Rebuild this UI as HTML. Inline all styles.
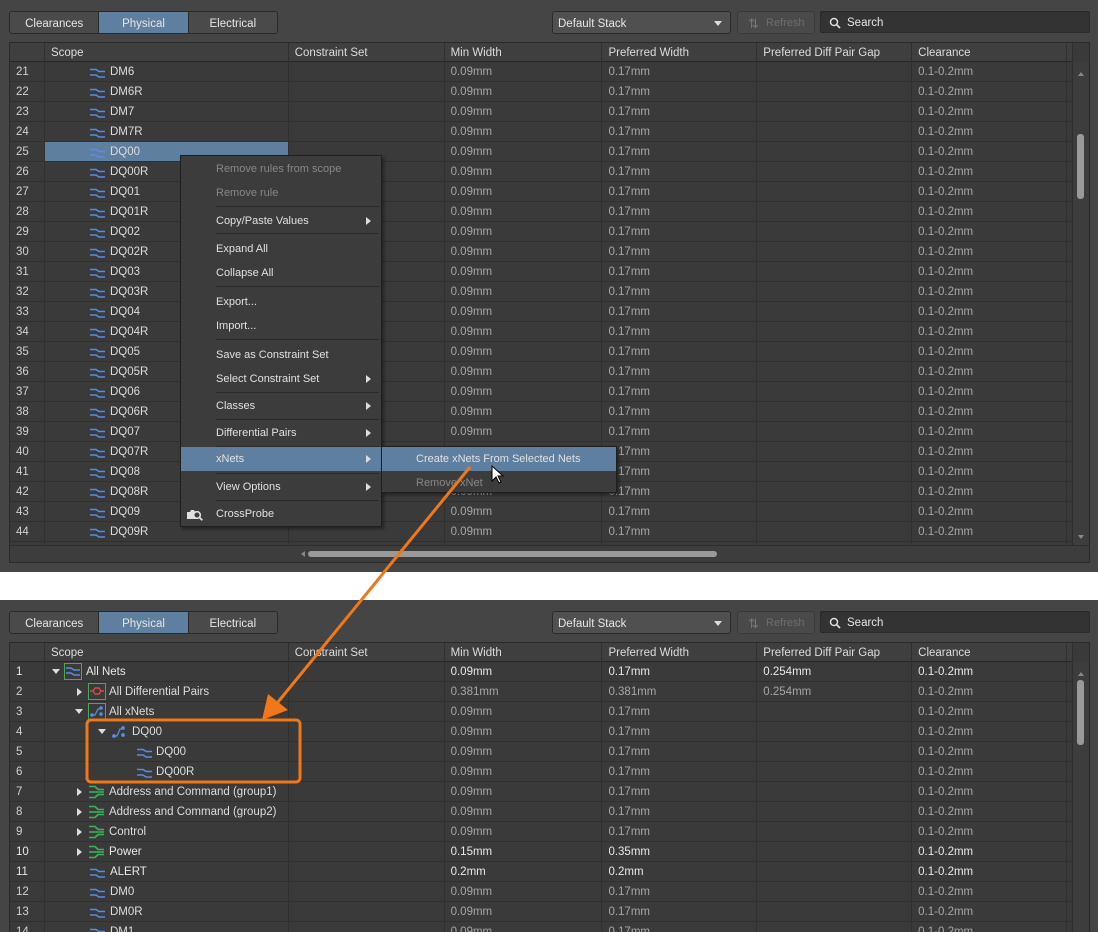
<!DOCTYPE html><html><head><meta charset="utf-8"><style>
*{box-sizing:border-box;margin:0;padding:0}
body{width:1098px;height:932px;background:#fff;font-family:"Liberation Sans","DejaVu Sans",sans-serif;font-size:11.5px;color:#d8d8d8;position:relative;overflow:hidden}
.panel{position:absolute;left:0;width:1098px;background:#454545;overflow:hidden}
.tabs{position:absolute;left:9px;top:11px;width:269px;height:23px;border:1px solid #2a2a2a;border-radius:3px;display:flex;overflow:hidden;background:#4a4a4a}
.tabs div{flex:1;text-align:center;line-height:24px;font-size:11.5px;color:#e6e6e6;border-right:1px solid #2a2a2a}
.tabs div:last-child{border:none}
.tabs .on{background:#5e7f9f}
.dd{position:absolute;left:552px;top:11px;width:179px;height:23px;border:1px solid #2a2a2a;border-radius:3px;background:#505050;line-height:24px;padding-left:5px;font-size:11.5px;color:#e6e6e6}
.dd:after{content:"";position:absolute;right:8px;top:9px;border:4px solid transparent;border-top:5px solid #ddd}
.rf{position:absolute;left:737px;top:11px;width:78px;height:23px;border:1px solid #3a3a3a;border-radius:3px;background:#4a4a4a;color:#6c6c6c;line-height:23px;padding-left:28px;font-size:11px}
.rf span{position:absolute;left:10px;top:0;color:#777;font-size:13px}
.sr{position:absolute;left:820px;top:11px;width:270px;height:22px;border:1px solid #2a2a2a;border-radius:2px;background:#333;line-height:22px;padding-left:26px;font-size:11.5px;color:#e6e6e6}
.sr svg{position:absolute;left:8px;top:5px}
.tbl{position:absolute;left:9px;width:1081px;border:1px solid #2a2a2a;background:#3a3a3a;overflow:hidden}
.r{position:absolute;left:0;height:20px;width:1063px;display:flex;border-bottom:1px solid #303030}
.r>div{height:19px;line-height:21px;border-right:1px solid #303030;padding-left:6px;white-space:nowrap;overflow:hidden;color:#a6a6a6;position:relative}
.r>div:nth-child(1){width:35px;color:#d0d0d0}
.r>div:nth-child(2){width:244px;color:#dcdcdc}
.r>div:nth-child(3){width:156px}
.r>div:nth-child(4){width:158px}
.r>div:nth-child(5){width:155px}
.r>div:nth-child(6){width:155px}
.r>div:nth-child(7){width:155px}
.r>div:nth-child(8){width:6px;padding:0}
.h{background:#3f3f3f;border-bottom:1px solid #262626;height:19px}
.h>div{color:#dcdcdc!important}
.w>div{color:#e8e8e8!important}
.sel>div:nth-child(2){background:#5e7f9f}
.ic{position:absolute;top:5px}
.tx{position:absolute;top:0}
.tri{position:absolute;top:7px;width:0;height:0}
.td{border-left:4px solid transparent;border-right:4px solid transparent;border-top:5px solid #ddd}
.tr{border-top:4px solid transparent;border-bottom:4px solid transparent;border-left:5px solid #ddd;top:6px}
.vs{position:absolute;right:0;top:19px;width:17px;bottom:0;background:#3d3d3d;border-left:1px solid #2e2e2e}
.thumb{position:absolute;left:4px;width:7px;background:#9a9a9a;border-radius:3px}
.menu{position:absolute;background:#3c3c3c;border:1px solid #1f1f1f;box-shadow:2px 2px 3px rgba(0,0,0,.4)}
.mi{position:absolute;left:0;right:0;height:24px;line-height:25px;padding-left:35px;color:#e0e0e0;font-size:11px}
.mi.d{color:#878787}
.mi.hl{background:#5e7f9f}
.mi .ar{position:absolute;right:10px;top:8px;border-top:4px solid transparent;border-bottom:4px solid transparent;border-left:5px solid #ddd}
.sep{position:absolute;left:35px;right:2px;height:1px;background:#2a2a2a}
</style></head><body>
<svg width="0" height="0" style="position:absolute"><defs>
<g id="net"><path d="M1 2.5h6l3 2h6M1 8h6l3 2h6" stroke="#5a8be0" stroke-width="1.6" fill="none"/></g>
<g id="bus"><path d="M1 1.5h6l3 3h6M1 7h15M1 12.5h6l3-3h6" stroke="#3bb45a" stroke-width="1.6" fill="none"/></g>
</defs></svg>

<!-- TOP PANEL -->
<div class="panel" style="top:0;height:572px">
<div class="tabs"><div>Clearances</div><div class="on">Physical</div><div>Electrical</div></div>
<div class="dd">Default Stack</div>
<div class="rf"><span>⇅</span>Refresh</div>
<div class="sr"><svg width="12" height="12"><circle cx="5" cy="5" r="3.5" stroke="#ddd" stroke-width="1.5" fill="none"/><path d="M7.5 7.5l3.5 3.5" stroke="#ddd" stroke-width="1.8"/></svg>Search</div>
<div class="tbl" style="top:42px;height:521px">
<div class="r h" style="top:0"><div></div><div>Scope</div><div>Constraint Set</div><div>Min Width</div><div>Preferred Width</div><div>Preferred Diff Pair Gap</div><div>Clearance</div><div></div></div>
<div class="r" style="top:19px"><div>21</div><div><svg class="ic" style="left:44px" width="17" height="12"><use href="#net"/></svg><span class="tx" style="left:65px">DM6</span></div><div></div><div>0.09mm</div><div>0.17mm</div><div></div><div>0.1-0.2mm</div><div></div></div>
<div class="r" style="top:39px"><div>22</div><div><svg class="ic" style="left:44px" width="17" height="12"><use href="#net"/></svg><span class="tx" style="left:65px">DM6R</span></div><div></div><div>0.09mm</div><div>0.17mm</div><div></div><div>0.1-0.2mm</div><div></div></div>
<div class="r" style="top:59px"><div>23</div><div><svg class="ic" style="left:44px" width="17" height="12"><use href="#net"/></svg><span class="tx" style="left:65px">DM7</span></div><div></div><div>0.09mm</div><div>0.17mm</div><div></div><div>0.1-0.2mm</div><div></div></div>
<div class="r" style="top:79px"><div>24</div><div><svg class="ic" style="left:44px" width="17" height="12"><use href="#net"/></svg><span class="tx" style="left:65px">DM7R</span></div><div></div><div>0.09mm</div><div>0.17mm</div><div></div><div>0.1-0.2mm</div><div></div></div>
<div class="r sel" style="top:99px"><div>25</div><div><svg class="ic" style="left:44px" width="17" height="12"><use href="#net"/></svg><span class="tx" style="left:65px">DQ00</span></div><div></div><div>0.09mm</div><div>0.17mm</div><div></div><div>0.1-0.2mm</div><div></div></div>
<div class="r" style="top:119px"><div>26</div><div><svg class="ic" style="left:44px" width="17" height="12"><use href="#net"/></svg><span class="tx" style="left:65px">DQ00R</span></div><div></div><div>0.09mm</div><div>0.17mm</div><div></div><div>0.1-0.2mm</div><div></div></div>
<div class="r" style="top:139px"><div>27</div><div><svg class="ic" style="left:44px" width="17" height="12"><use href="#net"/></svg><span class="tx" style="left:65px">DQ01</span></div><div></div><div>0.09mm</div><div>0.17mm</div><div></div><div>0.1-0.2mm</div><div></div></div>
<div class="r" style="top:159px"><div>28</div><div><svg class="ic" style="left:44px" width="17" height="12"><use href="#net"/></svg><span class="tx" style="left:65px">DQ01R</span></div><div></div><div>0.09mm</div><div>0.17mm</div><div></div><div>0.1-0.2mm</div><div></div></div>
<div class="r" style="top:179px"><div>29</div><div><svg class="ic" style="left:44px" width="17" height="12"><use href="#net"/></svg><span class="tx" style="left:65px">DQ02</span></div><div></div><div>0.09mm</div><div>0.17mm</div><div></div><div>0.1-0.2mm</div><div></div></div>
<div class="r" style="top:199px"><div>30</div><div><svg class="ic" style="left:44px" width="17" height="12"><use href="#net"/></svg><span class="tx" style="left:65px">DQ02R</span></div><div></div><div>0.09mm</div><div>0.17mm</div><div></div><div>0.1-0.2mm</div><div></div></div>
<div class="r" style="top:219px"><div>31</div><div><svg class="ic" style="left:44px" width="17" height="12"><use href="#net"/></svg><span class="tx" style="left:65px">DQ03</span></div><div></div><div>0.09mm</div><div>0.17mm</div><div></div><div>0.1-0.2mm</div><div></div></div>
<div class="r" style="top:239px"><div>32</div><div><svg class="ic" style="left:44px" width="17" height="12"><use href="#net"/></svg><span class="tx" style="left:65px">DQ03R</span></div><div></div><div>0.09mm</div><div>0.17mm</div><div></div><div>0.1-0.2mm</div><div></div></div>
<div class="r" style="top:259px"><div>33</div><div><svg class="ic" style="left:44px" width="17" height="12"><use href="#net"/></svg><span class="tx" style="left:65px">DQ04</span></div><div></div><div>0.09mm</div><div>0.17mm</div><div></div><div>0.1-0.2mm</div><div></div></div>
<div class="r" style="top:279px"><div>34</div><div><svg class="ic" style="left:44px" width="17" height="12"><use href="#net"/></svg><span class="tx" style="left:65px">DQ04R</span></div><div></div><div>0.09mm</div><div>0.17mm</div><div></div><div>0.1-0.2mm</div><div></div></div>
<div class="r" style="top:299px"><div>35</div><div><svg class="ic" style="left:44px" width="17" height="12"><use href="#net"/></svg><span class="tx" style="left:65px">DQ05</span></div><div></div><div>0.09mm</div><div>0.17mm</div><div></div><div>0.1-0.2mm</div><div></div></div>
<div class="r" style="top:319px"><div>36</div><div><svg class="ic" style="left:44px" width="17" height="12"><use href="#net"/></svg><span class="tx" style="left:65px">DQ05R</span></div><div></div><div>0.09mm</div><div>0.17mm</div><div></div><div>0.1-0.2mm</div><div></div></div>
<div class="r" style="top:339px"><div>37</div><div><svg class="ic" style="left:44px" width="17" height="12"><use href="#net"/></svg><span class="tx" style="left:65px">DQ06</span></div><div></div><div>0.09mm</div><div>0.17mm</div><div></div><div>0.1-0.2mm</div><div></div></div>
<div class="r" style="top:359px"><div>38</div><div><svg class="ic" style="left:44px" width="17" height="12"><use href="#net"/></svg><span class="tx" style="left:65px">DQ06R</span></div><div></div><div>0.09mm</div><div>0.17mm</div><div></div><div>0.1-0.2mm</div><div></div></div>
<div class="r" style="top:379px"><div>39</div><div><svg class="ic" style="left:44px" width="17" height="12"><use href="#net"/></svg><span class="tx" style="left:65px">DQ07</span></div><div></div><div>0.09mm</div><div>0.17mm</div><div></div><div>0.1-0.2mm</div><div></div></div>
<div class="r" style="top:399px"><div>40</div><div><svg class="ic" style="left:44px" width="17" height="12"><use href="#net"/></svg><span class="tx" style="left:65px">DQ07R</span></div><div></div><div>0.09mm</div><div>0.17mm</div><div></div><div>0.1-0.2mm</div><div></div></div>
<div class="r" style="top:419px"><div>41</div><div><svg class="ic" style="left:44px" width="17" height="12"><use href="#net"/></svg><span class="tx" style="left:65px">DQ08</span></div><div></div><div>0.09mm</div><div>0.17mm</div><div></div><div>0.1-0.2mm</div><div></div></div>
<div class="r" style="top:439px"><div>42</div><div><svg class="ic" style="left:44px" width="17" height="12"><use href="#net"/></svg><span class="tx" style="left:65px">DQ08R</span></div><div></div><div>0.09mm</div><div>0.17mm</div><div></div><div>0.1-0.2mm</div><div></div></div>
<div class="r" style="top:459px"><div>43</div><div><svg class="ic" style="left:44px" width="17" height="12"><use href="#net"/></svg><span class="tx" style="left:65px">DQ09</span></div><div></div><div>0.09mm</div><div>0.17mm</div><div></div><div>0.1-0.2mm</div><div></div></div>
<div class="r" style="top:479px"><div>44</div><div><svg class="ic" style="left:44px" width="17" height="12"><use href="#net"/></svg><span class="tx" style="left:65px">DQ09R</span></div><div></div><div>0.09mm</div><div>0.17mm</div><div></div><div>0.1-0.2mm</div><div></div></div>
<div class="r" style="top:499px"><div></div><div><svg class="ic" style="left:44px" width="17" height="12"><use href="#net"/></svg></div><div></div><div></div><div></div><div></div><div></div><div></div></div>
<div class="vs" style="bottom:17px"><div style="position:absolute;left:5px;top:7px;border:3px solid transparent;border-bottom:4px solid #888"></div><div class="thumb" style="top:72px;height:65px"></div><div style="position:absolute;left:5px;bottom:3px;border:3px solid transparent;border-top:4px solid #888"></div></div>
<div style="position:absolute;left:0;right:0;bottom:0;height:17px;background:#3d3d3d;border-top:1px solid #2e2e2e"><div style="position:absolute;left:288px;top:5px;border:3px solid transparent;border-right:4px solid #888"></div><div style="position:absolute;left:298px;top:5px;width:409px;height:6px;border-radius:3px;background:#9a9a9a"></div></div>
</div>

<!-- context menu -->
<div class="menu" style="left:180px;top:155px;width:202px;height:372px">
<div class="mi d" style="top:1px">Remove rules from scope</div>
<div class="mi d" style="top:25px">Remove rule</div>
<div class="sep" style="top:50px"></div>
<div class="mi" style="top:53px">Copy/Paste Values<i class="ar"></i></div>
<div class="sep" style="top:77px"></div>
<div class="mi" style="top:81px">Expand All</div>
<div class="mi" style="top:105px">Collapse All</div>
<div class="sep" style="top:130px"></div>
<div class="mi" style="top:134px">Export...</div>
<div class="mi" style="top:158px">Import...</div>
<div class="sep" style="top:183px"></div>
<div class="mi" style="top:187px">Save as Constraint Set</div>
<div class="mi" style="top:211px">Select Constraint Set<i class="ar"></i></div>
<div class="sep" style="top:236px"></div>
<div class="mi" style="top:238px">Classes<i class="ar"></i></div>
<div class="sep" style="top:263px"></div>
<div class="mi" style="top:265px">Differential Pairs<i class="ar"></i></div>
<div class="sep" style="top:290px"></div>
<div class="mi hl" style="top:291px">xNets<i class="ar"></i></div>
<div class="sep" style="top:317px"></div>
<div class="mi" style="top:319px">View Options<i class="ar"></i></div>
<div class="sep" style="top:344px"></div>
<div class="mi" style="top:346px"><svg style="position:absolute;left:5px;top:6px" width="18" height="13"><path d="M1 4h3l1-2h3l1 2h1v7H1z" fill="#e0e0e0"/><circle cx="11" cy="7" r="3.3" stroke="#e0e0e0" stroke-width="1.6" fill="#3c3c3c"/><path d="M13.3 9.3l3 3" stroke="#e0e0e0" stroke-width="1.8"/></svg>CrossProbe</div>
</div>
<div class="menu" style="left:381px;top:446px;width:236px;height:47px">
<div class="mi hl" style="top:0;padding-left:34px">Create xNets From Selected Nets</div>
<div class="mi d" style="top:24px;padding-left:34px">Remove xNet</div>
</div>
</div>

<!-- BOTTOM PANEL -->
<div class="panel" style="top:600px;height:332px">
<div class="tabs"><div>Clearances</div><div class="on">Physical</div><div>Electrical</div></div>
<div class="dd">Default Stack</div>
<div class="rf"><span>⇅</span>Refresh</div>
<div class="sr"><svg width="12" height="12"><circle cx="5" cy="5" r="3.5" stroke="#ddd" stroke-width="1.5" fill="none"/><path d="M7.5 7.5l3.5 3.5" stroke="#ddd" stroke-width="1.8"/></svg>Search</div>
<div class="tbl" style="top:42px;height:300px">
<div class="r h" style="top:0"><div></div><div>Scope</div><div>Constraint Set</div><div>Min Width</div><div>Preferred Width</div><div>Preferred Diff Pair Gap</div><div>Clearance</div><div></div></div>
<div class="r w" style="top:19px"><div>1</div><div><i class="tri td" style="left:7px"></i><svg class="ic" style="left:19px;top:1px" width="18" height="17"><rect x=".5" y=".5" width="17" height="16" fill="none" stroke="#46a858"/><path d="M2 5h5l3 2h6M2 10h5l3 2h6" stroke="#5a8be0" stroke-width="1.5" fill="none"/></svg><span class="tx" style="left:41px">All Nets</span></div><div></div><div>0.09mm</div><div>0.17mm</div><div>0.254mm</div><div>0.1-0.2mm</div><div></div></div>
<div class="r" style="top:39px"><div>2</div><div><i class="tri tr" style="left:32px"></i><svg class="ic" style="left:43px;top:1px" width="18" height="17"><rect x=".5" y=".5" width="17" height="16" fill="none" stroke="#46a858"/><path d="M2 8h3l2-3h4l2 3h3M5 8l2 3h4l2-3" stroke="#d84848" stroke-width="1.4" fill="none"/></svg><span class="tx" style="left:64px">All Differential Pairs</span></div><div></div><div>0.381mm</div><div>0.381mm</div><div>0.254mm</div><div>0.1-0.2mm</div><div></div></div>
<div class="r" style="top:59px"><div>3</div><div><i class="tri td" style="left:30px"></i><svg class="ic" style="left:43px;top:1px" width="18" height="17"><rect x=".5" y=".5" width="17" height="16" fill="none" stroke="#46a858"/><path d="M4 12h3l3-6h3" stroke="#5a8be0" stroke-width="1.3" fill="none"/><circle cx="4" cy="12" r="1.8" fill="#5a8be0"/><circle cx="13" cy="5" r="1.8" fill="#5a8be0"/><circle cx="13" cy="11" r="1.8" fill="#5a8be0"/></svg><span class="tx" style="left:64px">All xNets</span></div><div></div><div>0.09mm</div><div>0.17mm</div><div></div><div>0.1-0.2mm</div><div></div></div>
<div class="r" style="top:79px"><div>4</div><div><i class="tri td" style="left:53px"></i><svg class="ic" style="left:66px;top:2px" width="16" height="15"><path d="M3 12h3l3-7h3" stroke="#5a8be0" stroke-width="1.3" fill="none"/><circle cx="3" cy="12" r="1.9" fill="#5a8be0"/><circle cx="12" cy="4" r="1.9" fill="#5a8be0"/><circle cx="12" cy="11" r="1.9" fill="#5a8be0"/></svg><span class="tx" style="left:87px">DQ00</span></div><div></div><div>0.09mm</div><div>0.17mm</div><div></div><div>0.1-0.2mm</div><div></div></div>
<div class="r" style="top:99px"><div>5</div><div><svg class="ic" style="left:91px" width="17" height="12"><use href="#net"/></svg><span class="tx" style="left:111px">DQ00</span></div><div></div><div>0.09mm</div><div>0.17mm</div><div></div><div>0.1-0.2mm</div><div></div></div>
<div class="r" style="top:119px"><div>6</div><div><svg class="ic" style="left:91px" width="17" height="12"><use href="#net"/></svg><span class="tx" style="left:111px">DQ00R</span></div><div></div><div>0.09mm</div><div>0.17mm</div><div></div><div>0.1-0.2mm</div><div></div></div>
<div class="r" style="top:139px"><div>7</div><div><i class="tri tr" style="left:32px"></i><svg class="ic" style="left:43px;top:3px" width="17" height="14"><use href="#bus"/></svg><span class="tx" style="left:64px">Address and Command (group1)</span></div><div></div><div>0.09mm</div><div>0.17mm</div><div></div><div>0.1-0.2mm</div><div></div></div>
<div class="r" style="top:159px"><div>8</div><div><i class="tri tr" style="left:32px"></i><svg class="ic" style="left:43px;top:3px" width="17" height="14"><use href="#bus"/></svg><span class="tx" style="left:64px">Address and Command (group2)</span></div><div></div><div>0.09mm</div><div>0.17mm</div><div></div><div>0.1-0.2mm</div><div></div></div>
<div class="r" style="top:179px"><div>9</div><div><i class="tri tr" style="left:32px"></i><svg class="ic" style="left:43px;top:3px" width="17" height="14"><use href="#bus"/></svg><span class="tx" style="left:64px">Control</span></div><div></div><div>0.09mm</div><div>0.17mm</div><div></div><div>0.1-0.2mm</div><div></div></div>
<div class="r w" style="top:199px"><div>10</div><div><i class="tri tr" style="left:32px"></i><svg class="ic" style="left:43px;top:3px" width="17" height="14"><use href="#bus"/></svg><span class="tx" style="left:64px">Power</span></div><div></div><div>0.15mm</div><div>0.35mm</div><div></div><div>0.1-0.2mm</div><div></div></div>
<div class="r w" style="top:219px"><div>11</div><div><svg class="ic" style="left:44px" width="17" height="12"><use href="#net"/></svg><span class="tx" style="left:65px">ALERT</span></div><div></div><div>0.2mm</div><div>0.2mm</div><div></div><div>0.1-0.2mm</div><div></div></div>
<div class="r" style="top:239px"><div>12</div><div><svg class="ic" style="left:44px" width="17" height="12"><use href="#net"/></svg><span class="tx" style="left:65px">DM0</span></div><div></div><div>0.09mm</div><div>0.17mm</div><div></div><div>0.1-0.2mm</div><div></div></div>
<div class="r" style="top:259px"><div>13</div><div><svg class="ic" style="left:44px" width="17" height="12"><use href="#net"/></svg><span class="tx" style="left:65px">DM0R</span></div><div></div><div>0.09mm</div><div>0.17mm</div><div></div><div>0.1-0.2mm</div><div></div></div>
<div class="r" style="top:279px"><div>14</div><div><svg class="ic" style="left:44px" width="17" height="12"><use href="#net"/></svg><span class="tx" style="left:65px">DM1</span></div><div></div><div>0.09mm</div><div>0.17mm</div><div></div><div>0.1-0.2mm</div><div></div></div>
<div class="vs"><div style="position:absolute;left:5px;top:7px;border:3px solid transparent;border-bottom:4px solid #888"></div><div class="thumb" style="top:18px;height:65px"></div></div>
</div>
</div>

<!-- orange annotation -->
<svg style="position:absolute;left:0;top:0" width="1098" height="932">
<rect x="87" y="720" width="213" height="62" rx="4" fill="none" stroke="#f07818" stroke-width="3"/>
<path d="M470 467L278 702" stroke="#f07818" stroke-width="3" fill="none"/>
<path d="M262 720l6-26 20 16z" fill="#f07818"/>
</svg>
<svg style="position:absolute;left:491px;top:465px" width="14" height="20"><path d="M1 1v15l4-4 3 6 2-1-3-6h5z" fill="#fff" stroke="#000" stroke-width="1"/></svg>
</body></html>
